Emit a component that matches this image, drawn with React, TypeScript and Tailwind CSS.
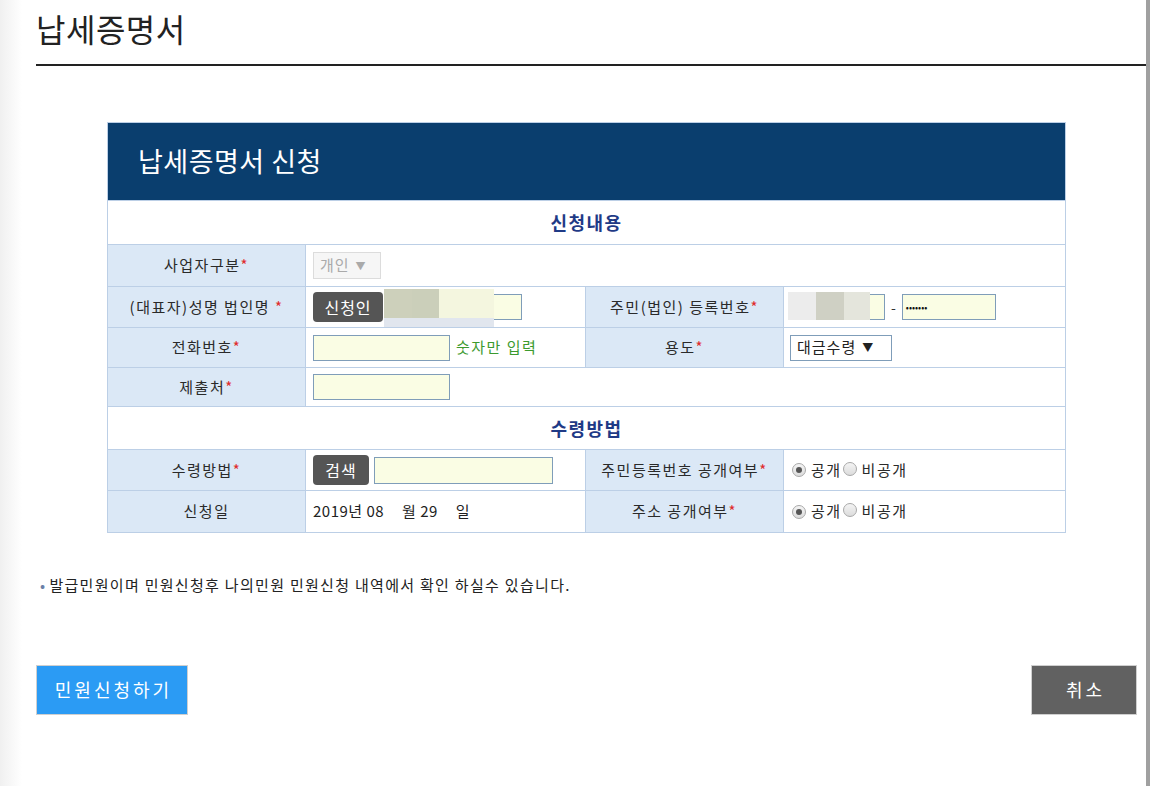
import React from 'react';

const font = { fontFamily: '"Noto Sans CJK KR", "Noto Sans", sans-serif' };

function Star() {
  return <span className="text-[#e02b2b]">*</span>;
}

function Label({ children }: { children: React.ReactNode }) {
  return (
    <td className="border border-[#bccfe6] bg-[#dbe8f6] text-center text-[15px] text-[#2a2a2a] tracking-[1.5px]">
      {children}
    </td>
  );
}

function Radio({ checked }: { checked?: boolean }) {
  return (
    <span className="inline-flex h-[14px] w-[14px] items-center justify-center rounded-full border border-[#a9a9a9] bg-gradient-to-b from-[#f4f4f4] to-[#dcdcdc]">
      {checked && <span className="h-[6px] w-[6px] rounded-full bg-[#555]" />}
    </span>
  );
}

function RadioPair() {
  return (
    <div className="flex items-center text-[15px] text-[#2a2a2a] tracking-[1.5px]">
      <Radio checked />
      <span className="ml-[5px]">공개</span>
      <span className="ml-[1px]"><Radio /></span>
      <span className="ml-[5px]">비공개</span>
    </div>
  );
}

function GreyBtn({ children, w }: { children: React.ReactNode; w: string }) {
  return (
    <span className={`inline-flex h-[30px] ${w} items-center justify-center rounded-[4px] bg-[#555] text-[16px] text-white tracking-[1px]`}>
      {children}
    </span>
  );
}

export default function App() {
  return (
    <div className="relative min-h-[786px] w-[1150px] bg-white" style={font}>
      <div className="absolute left-0 top-0 h-full w-[22px] bg-gradient-to-r from-[#f0f0f0] to-white" />
      <div className="absolute right-0 top-0 h-full w-[4px] bg-[#a0a0a0]" />
      <div className="relative pl-[36px] pr-[4px]">
        <h1 className="pt-[8px] text-[32px] leading-[40px] text-[#222] tracking-[0.5px]">납세증명서</h1>
        <div className="mt-[16px] h-[2px] bg-[#222]" />

        <div className="ml-[71px] mt-[56px] w-[958px]">
          <table className="w-[958px] table-fixed border-collapse">
            <colgroup>
              <col className="w-[198px]" />
              <col className="w-[280px]" />
              <col className="w-[198px]" />
              <col className="w-[282px]" />
            </colgroup>
            <tbody>
              <tr className="h-[78px]">
                <td colSpan={4} className="border border-[#bccfe6] bg-[#0a3e6e] pl-[30px] text-[27px] text-white tracking-[0.5px]">
                  납세증명서 신청
                </td>
              </tr>
              <tr className="h-[44px]">
                <td colSpan={4} className="border border-[#bccfe6] text-center text-[18px] font-bold text-[#1f3a86] tracking-[1.5px]">
                  신청내용
                </td>
              </tr>
              <tr className="h-[42px]">
                <Label>사업자구분<Star /></Label>
                <td colSpan={3} className="border border-[#bccfe6] pl-[7px]">
                  <span className="inline-flex h-[27px] w-[68px] items-center gap-[6px] border border-[#dcdcdc] bg-[#f6f6f6] pl-[6px] text-[15px] tracking-[1px] text-[#aaa]">
                    개인 <span className="text-[10px]">▼</span>
                  </span>
                </td>
              </tr>
              <tr className="h-[41px]">
                <Label>(대표자)성명 법인명 <Star /></Label>
                <td className="border border-[#bccfe6] pl-[7px]">
                  <div className="relative flex items-center">
                    <GreyBtn w="w-[70px]">신청인</GreyBtn>
                    <span className="ml-[1px] h-[26px] w-[138px] border border-[#7f9db9] bg-[#fafde4]" />
                    <span className="absolute left-[71px] top-[-3px] flex h-[38px] w-[110px] flex-col">
                      <span className="flex h-[29px]">
                        <span className="w-[28px] bg-[#cdd0bb]" />
                        <span className="w-[27px] bg-[#cbcfba]" />
                        <span className="w-[55px] bg-[#f4f6df]" />
                      </span>
                      <span className="h-[9px] bg-[#e1e6ee]" />
                    </span>
                  </div>
                </td>
                <Label>주민(법인) 등록번호<Star /></Label>
                <td className="border border-[#bccfe6] pl-[6px]">
                  <div className="relative flex items-center">
                    <span className="h-[26px] w-[95px] border border-[#7f9db9] bg-[#fafde4]" />
                    <span className="mx-[6px] text-[14px] text-[#333]">-</span>
                    <span className="flex h-[26px] w-[94px] items-center border border-[#7f9db9] bg-[#fafde4] pl-[3px] text-[9px] leading-none tracking-[0px] text-[#111]">
                      •••••••
                    </span>
                    <span className="absolute left-[-2px] top-[-2px] flex h-[28px] w-[82px]">
                      <span className="w-[28px] bg-[#ececec]" />
                      <span className="w-[28px] bg-[#cfd0c4]" />
                      <span className="w-[26px] bg-[#e4e5dc]" />
                    </span>
                  </div>
                </td>
              </tr>
              <tr className="h-[40px]">
                <Label>전화번호<Star /></Label>
                <td className="border border-[#bccfe6] pl-[7px]">
                  <div className="flex items-center">
                    <span className="h-[26px] w-[137px] border border-[#7f9db9] bg-[#fafde4]" />
                    <span className="ml-[6px] text-[15px] tracking-[1.5px] text-[#3c9a2e]">숫자만 입력</span>
                  </div>
                </td>
                <Label>용도<Star /></Label>
                <td className="border border-[#bccfe6] pl-[6px]">
                  <span className="inline-flex h-[26px] w-[102px] items-center border border-[#7f9db9] bg-white pl-[6px] text-[15px] tracking-[1px] text-[#222]">
                    대금수령 <span className="ml-[6px] text-[11px]">▼</span>
                  </span>
                </td>
              </tr>
              <tr className="h-[39px]">
                <Label>제출처<Star /></Label>
                <td colSpan={3} className="border border-[#bccfe6] pl-[7px]">
                  <span className="block h-[26px] w-[137px] border border-[#7f9db9] bg-[#fafde4]" />
                </td>
              </tr>
              <tr className="h-[43px]">
                <td colSpan={4} className="border border-[#bccfe6] text-center text-[18px] font-bold text-[#1f3a86] tracking-[1.5px]">
                  수령방법
                </td>
              </tr>
              <tr className="h-[41px]">
                <Label>수령방법<Star /></Label>
                <td className="border border-[#bccfe6] pl-[7px]">
                  <div className="flex items-center">
                    <GreyBtn w="w-[56px]">검색</GreyBtn>
                    <span className="ml-[5px] h-[27px] w-[179px] border border-[#7f9db9] bg-[#fafde4]" />
                  </div>
                </td>
                <Label>주민등록번호 공개여부<Star /></Label>
                <td className="border border-[#bccfe6] pl-[8px]">
                  <RadioPair />
                </td>
              </tr>
              <tr className="h-[42px]">
                <Label>신청일</Label>
                <td className="border border-[#bccfe6] pl-[7px] text-[15px] text-[#222] tracking-[0.5px]">
                  2019년 08 <span className="ml-[14px]">월 29</span> <span className="ml-[14px]">일</span>
                </td>
                <Label>주소 공개여부<Star /></Label>
                <td className="border border-[#bccfe6] pl-[8px]">
                  <RadioPair />
                </td>
              </tr>
            </tbody>
          </table>
        </div>

        <p className="mt-[41px] pl-[4px] text-[15px] text-[#222] tracking-[1.3px]">
          <span className="mr-[3px] text-[#6a7fa8]">•</span>발급민원이며 민원신청후 나의민원 민원신청 내역에서 확인 하실수 있습니다.
        </p>

        <div className="mt-[68px] flex items-center justify-between pr-[9px]">
          <button className="h-[50px] w-[152px] border border-[#cfcfcf] bg-[#2b9bf4] pl-[3px] text-[18px] text-white tracking-[3px]">
            민원신청하기
          </button>
          <button className="h-[50px] w-[106px] border border-[#cfcfcf] bg-[#616161] pl-[3px] text-[18px] text-white tracking-[3px]">
            취소
          </button>
        </div>
      </div>
    </div>
  );
}
